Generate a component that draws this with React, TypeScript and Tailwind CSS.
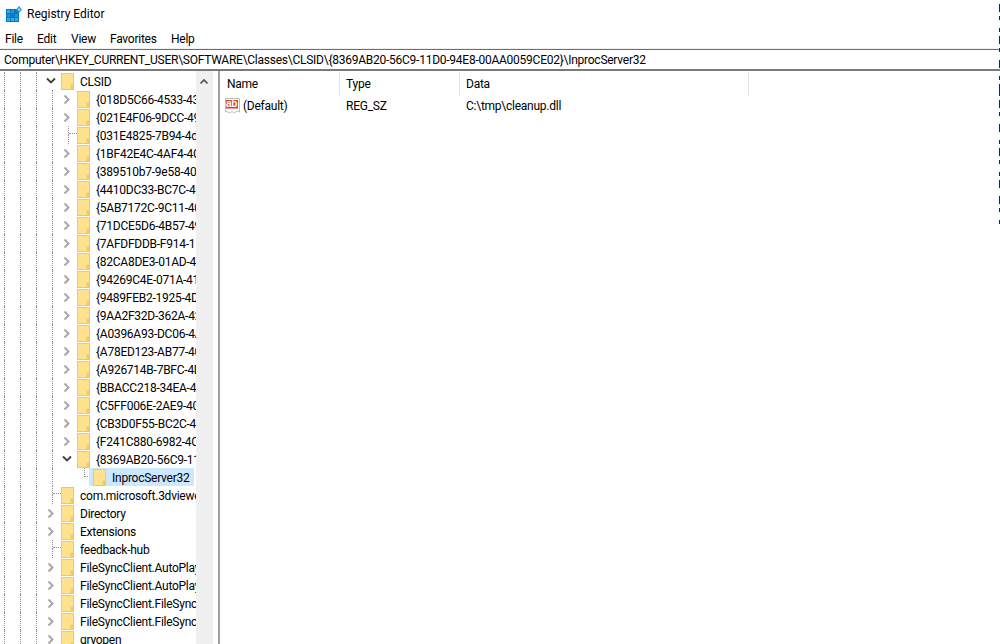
const ui = "font-['Roboto','Noto_Sans',sans-serif]";

type Kind = "closed" | "open" | "leaf" | "lastLeaf";

type Node = { label: string; depth: number; kind: Kind; selected?: boolean };

const guids = [
  "{018D5C66-4533-4307-9B53-224DE2ED1FE6}",
  "{021E4F06-9DCC-49AD-88CF-ECC2DA314C8A}",
  "{031E4825-7B94-4dc3-B131-E946B44C8DD5}",
  "{1BF42E4C-4AF4-4CFD-A1A0-CF2960B8F63E}",
  "{389510b7-9e58-40d7-98bf-60b911cb0ea9}",
  "{4410DC33-BC7C-496B-AA84-4AEA3EEE75F7}",
  "{5AB7172C-9C11-405C-8DD5-AF20F3606282}",
  "{71DCE5D6-4B57-496B-AC21-CD5B54EB93FD}",
  "{7AFDFDDB-F914-11E4-8377-6C3BE50D980C}",
  "{82CA8DE3-01AD-4CEA-9D75-BE4C51810A9E}",
  "{94269C4E-071A-4116-90E6-52E557067E4E}",
  "{9489FEB2-1925-4D01-B788-6D912C70F7F2}",
  "{9AA2F32D-362A-42D9-9328-24A483E2CCC3}",
  "{A0396A93-DC06-4AEF-BEE9-95FFCCAEF20E}",
  "{A78ED123-AB77-406B-9962-2A5D9D2F7F30}",
  "{A926714B-7BFC-4D08-A035-80021395FFA8}",
  "{BBACC218-34EA-4666-9D7A-C78F2274A524}",
  "{C5FF006E-2AE9-408C-B85B-2DFDD5449D9C}",
  "{CB3D0F55-BC2C-4C1A-85ED-23ED75B5106B}",
];

const nodes: Node[] = [
  { label: "CLSID", depth: 0, kind: "open" },
  ...guids.map((label) => ({
    label,
    depth: 1,
    kind: label.startsWith("{031E") ? ("leaf" as Kind) : ("closed" as Kind),
  })),
  { label: "{F241C880-6982-4CE5-8CF7-7085BA96DA5A}", depth: 1, kind: "closed" },
  { label: "{8369AB20-56C9-11D0-94E8-00AA0059CE02}", depth: 1, kind: "open" },
  { label: "InprocServer32", depth: 2, kind: "lastLeaf", selected: true },
  { label: "com.microsoft.3dviewer", depth: 0, kind: "leaf" },
  { label: "Directory", depth: 0, kind: "closed" },
  { label: "Extensions", depth: 0, kind: "closed" },
  { label: "feedback-hub", depth: 0, kind: "leaf" },
  { label: "FileSyncClient.AutoPlayHandler", depth: 0, kind: "closed" },
  { label: "FileSyncClient.AutoPlayHandler.1", depth: 0, kind: "closed" },
  { label: "FileSyncClient.FileSyncClient", depth: 0, kind: "closed" },
  { label: "FileSyncClient.FileSyncClient.1", depth: 0, kind: "closed" },
  { label: "gryopen", depth: 0, kind: "closed" },
];

const dashes = [
  [4, 8], [16, 4], [28, 4], [36, 8], [48, 4], [60, 8], [76, 4], [84, 12], [100, 8], [112, 4],
  [124, 8], [140, 4], [148, 8], [160, 4], [172, 4], [180, 8], [196, 8], [208, 4], [220, 4],
];

const AppIcon = () => (
  <svg width="16" height="17" viewBox="0 0 16 17" className="shrink-0">
    <rect x="0" y="3" width="13" height="13" fill="#0a78c0" />
    <g fill="#22b2f2">
      <rect x="1" y="4" width="3" height="3" />
      <rect x="5" y="4" width="3" height="3" fill="#1796dc" />
      <rect x="1" y="8" width="3" height="3" fill="#1796dc" />
      <rect x="5" y="8" width="3" height="3" fill="#0f7fc8" />
      <rect x="9" y="8" width="3" height="3" fill="#1796dc" />
      <rect x="1" y="12" width="3" height="3" />
      <rect x="5" y="12" width="3" height="3" />
      <rect x="9" y="12" width="3" height="3" />
    </g>
    <path d="M13 0 16 3.5 13 7 10 3.5z" fill="#2a9ad8" />
    <path d="M13 2 14.3 3.5 13 5 11.7 3.5z" fill="#a8e2f8" />
  </svg>
);

const Folder = () => (
  <svg width="13" height="17" viewBox="0 0 13 17" className="shrink-0">
    <rect x="0.5" y="0.5" width="12" height="16" fill="#ffe28e" stroke="#f0c95a" />
    <path d="M9.5 16V11.5H12" fill="none" stroke="#f6d981" />
    <rect x="10" y="12" width="2" height="4" fill="#f0c95a" />
  </svg>
);

const Chevron = ({ open }: { open: boolean }) =>
  open ? (
    <svg width="10" height="8" viewBox="0 0 10 8" className="-ml-[3px]">
      <path d="M1 1.5 5 5.5 9 1.5" fill="none" stroke="#404040" strokeWidth="1.8" />
    </svg>
  ) : (
    <svg width="8" height="11" viewBox="0 0 8 11" className="-ml-[2px]">
      <path d="M1.5 1.5 5.5 5.5 1.5 9.5" fill="none" stroke="#a8a8a8" strokeWidth="2" />
    </svg>
  );

// one cell per tree level, the dotted guide sits on its left edge
const Guide = ({ narrow }: { narrow?: boolean }) => (
  <div className={`h-full shrink-0 border-l border-dotted border-[#8f8f8f] ${narrow ? "w-2" : "w-4"}`} />
);

const Expander = ({ kind }: { kind: Kind }) => {
  if (kind === "closed" || kind === "open") {
    return (
      <div className="flex h-full w-4 shrink-0 items-center justify-center">
        <Chevron open={kind === "open"} />
      </div>
    );
  }
  return (
    <div className="flex h-full w-4 shrink-0 flex-col pl-2">
      <div className={`h-[9px] border-l border-dotted border-[#8f8f8f] ${kind === "leaf" ? "" : "border-b"}`}>
        {kind === "leaf" && <div className="h-[8px] w-[8px] border-b border-dotted border-[#8f8f8f]" />}
      </div>
      {kind === "leaf" && <div className="h-[9px] border-l border-dotted border-[#8f8f8f]" />}
    </div>
  );
};

const TreeRow = ({ node }: { node: Node }) => (
  <div className="flex h-[18px] items-center pl-1">
    <Guide />
    <Guide />
    <Guide narrow={node.depth === 0} />
    {node.depth > 0 && <Guide narrow={node.depth === 1} />}
    {node.depth > 1 && <div className="h-full w-2 shrink-0" />}
    <Expander kind={node.kind} />
    <div
      className={`flex h-[18px] shrink-0 items-center gap-[6px] ${
        node.selected ? "-ml-[3px] w-[105px] bg-[#cce8ff] pl-[4px]" : "ml-px"
      }`}
    >
      <Folder />
      <span className="whitespace-nowrap pt-px">{node.label}</span>
    </div>
  </div>
);

export default function App() {
  return (
    <div className={`relative flex h-[644px] w-[1000px] flex-col overflow-hidden bg-white text-[12px] leading-[18px] tracking-[-0.25px] text-black ${ui}`}>
      <div className="flex h-[28px] items-center gap-[5px] pl-[6px]">
        <AppIcon />
        <span className="tracking-normal">Registry Editor</span>
      </div>

      <div className="flex h-[21px] items-center border-b border-[#f0f0f0] pl-[5px] pt-[2px]">
        <span className="w-[32px]">File</span>
        <span className="w-[34px]">Edit</span>
        <span className="w-[39px]">View</span>
        <span className="w-[61px]">Favorites</span>
        <span>Help</span>
      </div>

      <div className="flex h-[22px] items-center border-t border-b-2 border-t-[#6e6e6e] border-b-[#7a7a7a] pl-[4px]">
        <span className="whitespace-nowrap">
          {"Computer\\HKEY_CURRENT_USER\\SOFTWARE\\Classes\\CLSID\\{8369AB20-56C9-11D0-94E8-00AA0059CE02}\\InprocServer32"}
        </span>
      </div>

      <div className="flex min-h-0 flex-1">
        <div className="w-[196px] shrink-0 overflow-hidden pt-px">
          {nodes.map((node) => (
            <TreeRow key={node.label} node={node} />
          ))}
        </div>

        <div className="flex w-[17px] shrink-0 justify-center bg-[#f0f0f0] pr-px pt-[7px]">
          <svg width="10" height="7" viewBox="0 0 10 7" className="shrink-0">
            <path d="M1.5 5.5 5 2 8.5 5.5" fill="none" stroke="#505050" strokeWidth="1.7" />
          </svg>
        </div>

        <div className="ml-[5px] flex min-w-0 flex-1 flex-col border-l-2 border-[#a0a0a0]">
          <div className="flex h-[25px] items-center pt-px">
            <div className="h-[24px] w-[120px] border-r border-[#e5e5e5] pl-[7px] leading-[24px]">Name</div>
            <div className="h-[24px] w-[120px] border-r border-[#e5e5e5] pl-[6px] leading-[24px]">Type</div>
            <div className="h-[24px] w-[289px] border-r border-[#e5e5e5] pl-[6px] leading-[24px]">Data</div>
          </div>
          <div className="mt-px flex h-[18px] items-center">
            <div className="flex w-[120px] items-center gap-[2px] pl-[5px]">
              <svg width="16" height="16" viewBox="0 0 16 16" className="shrink-0">
                <path d="M0.5 0.5H14.5V14L12 13 9.5 15 7 13.5 4.5 15 2 13.5 0.5 14z" fill="#fff" stroke="#bdbdbd" />
                <rect x="1" y="2" width="12" height="8.5" fill="#d5452a" />
                <text x="1" y="9.2" fontSize="10" fontWeight="700" fill="#fff" fontFamily="'Liberation Sans', sans-serif">ab</text>
              </svg>
              <span>(Default)</span>
            </div>
            <div className="w-[120px] pl-[6px]">REG_SZ</div>
            <div className="pl-[6px]">{"C:\\tmp\\cleanup.dll"}</div>
          </div>
        </div>
      </div>

      {/* stray dashed selection edge down the right side of the capture */}
      <svg width="1" height="230" className="absolute right-0 top-0">
        {dashes.map(([y, h]) => (
          <rect key={y} x="0" y={y} width="1" height={h} fill="#0c2a5e" />
        ))}
      </svg>
    </div>
  );
}
